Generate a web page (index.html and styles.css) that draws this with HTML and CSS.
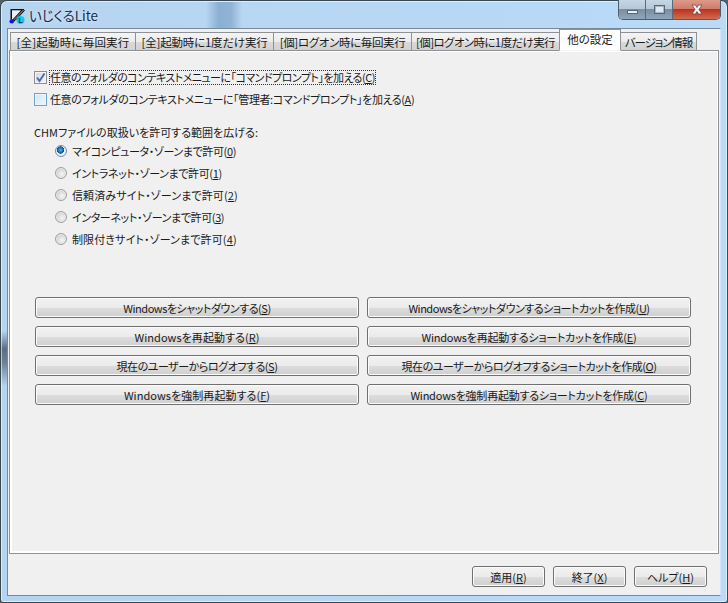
FILE: index.html
```html
<!DOCTYPE html>
<html lang="ja">
<head>
<meta charset="utf-8">
<title>いじくるLite</title>
<link rel="stylesheet" href="styles.css">
</head>
<body>
<div class="window">
  <div class="glass-shade"></div>
  <div class="titlebar">
    <svg class="app-icon" width="16" height="16" viewBox="0 0 16 16">
      <path d="M1.5 1H13V2.5H3V11H1.5Z" fill="#111"/>
      <path d="M3 2.5H11L5 11H3Z" fill="#eeeef2"/>
      <path d="M14 1L15.5 2.5 6 12.5 3.5 13.5 4.5 11Z" fill="#666" stroke="#111" stroke-width="1"/>
      <circle cx="2.8" cy="13.2" r="2.3" fill="#1018e0"/>
      <circle cx="11.5" cy="12" r="4" fill="#10c8f0"/>
      <text x="9.5" y="15" class="icon-letter">L</text>
    </svg>
    <span class="title">いじくるLite</span>
    <div class="controls">
      <div class="ctl ctl-min"><span class="glyph-min"></span></div>
      <div class="ctl ctl-max"><span class="glyph-max"></span></div>
      <div class="ctl ctl-close">
        <svg width="16" height="11" viewBox="0 0 16 11"><path d="M3 1H6.5L8 3.5 9.5 1H13L10 5.5 13 10H9.5L8 7.5 6.5 10H3L6 5.5Z" fill="#f2f2f2" stroke="#6b3a36" stroke-width=".7"/></svg>
      </div>
    </div>
  </div>
  <div class="client">
    <div class="tabs">
      <div class="tab t1">[全]起動時に毎回実行</div>
      <div class="tab t2">[全]起動時に1度だけ実行</div>
      <div class="tab t3">[個]ログオン時に毎回実行</div>
      <div class="tab t4">[個]ログオン時に1度だけ実行</div>
      <div class="tab active">他の設定</div>
      <div class="tab t6">バージョン情報</div>
    </div>
    <div class="panel">
      <div class="check-row first">
        <span class="check"><svg width="11" height="11" viewBox="0 0 11 11"><path d="M2 5.5L4.5 9 9.5 1.5" fill="none" stroke="#4a6fb5" stroke-width="2"/></svg></span>
        <span class="focus">任意のフォルダのコンテキストメニューに「コマンドプロンプト」を加える(<u>C</u>)</span>
      </div>
      <div class="check-row second">
        <span class="check empty"></span>
        <span>任意のフォルダのコンテキストメニューに「管理者:コマンドプロンプト」を加える(<u>A</u>)</span>
      </div>
      <div class="group-label">CHMファイルの取扱いを許可する範囲を広げる:</div>
      <div class="radios">
        <div class="radio-row"><span class="radio on"></span><span>マイコンピュータ・ゾーンまで許可(<u>0</u>)</span></div>
        <div class="radio-row"><span class="radio"></span><span>イントラネット・ゾーンまで許可(<u>1</u>)</span></div>
        <div class="radio-row kanji"><span class="radio"></span><span>信頼済みサイト・ゾーンまで許可(<u>2</u>)</span></div>
        <div class="radio-row"><span class="radio"></span><span>インターネット・ゾーンまで許可(<u>3</u>)</span></div>
        <div class="radio-row kanji"><span class="radio"></span><span>制限付きサイト・ゾーンまで許可(<u>4</u>)</span></div>
      </div>
      <div class="btn-grid">
        <div class="btn">Windowsをシャットダウンする(<u>S</u>)</div>
        <div class="btn">Windowsをシャットダウンするショートカットを作成(<u>U</u>)</div>
        <div class="btn short-kanji">Windowsを再起動する(<u>R</u>)</div>
        <div class="btn long-kanji">Windowsを再起動するショートカットを作成(<u>E</u>)</div>
        <div class="btn">現在のユーザーからログオフする(<u>S</u>)</div>
        <div class="btn">現在のユーザーからログオフするショートカットを作成(<u>O</u>)</div>
        <div class="btn short-kanji">Windowsを強制再起動する(<u>F</u>)</div>
        <div class="btn long-kanji">Windowsを強制再起動するショートカットを作成(<u>C</u>)</div>
      </div>
    </div>
    <div class="footer">
      <div class="btn small">適用(<u>R</u>)</div>
      <div class="btn small">終了(<u>X</u>)</div>
      <div class="btn small">ヘルプ(<u>H</u>)</div>
    </div>
  </div>
</div>
</body>
</html>
```
FILE: styles.css
```css
* { box-sizing: border-box; }
html, body { margin: 0; padding: 0; background: #50606e; }
body {
  width: 728px;
  height: 603px;
  overflow: hidden;
  font-family: "Noto Sans CJK JP", "Noto Sans", sans-serif;
  font-size: 11px;
  font-feature-settings: "palt";
  color: #1a1a1a;
}
u { text-underline-offset: 1px; text-decoration-thickness: 1px; }

.window {
  position: relative;
  width: 728px;
  height: 603px;
  padding: 0 6px 6px 6px;
  border: 1px solid #3a4650;
  border-radius: 7px 7px 3px 3px;
  background:
    linear-gradient(180deg, rgba(60,75,95,0) 330px, rgba(60,75,95,.75) 348px, rgba(60,75,95,.6) 362px, rgba(60,75,95,0) 385px) 0 0 / 6px 100% no-repeat,
    linear-gradient(90deg, #b5d4ef 0, #b9dbf8 100%);
  box-shadow: inset 0 0 0 1px rgba(255,255,255,.55);
  display: flex;
  flex-direction: column;
}
.glass-shade {
  position: absolute;
  left: 205px;
  top: 1px;
  width: 36px;
  height: 26px;
  background: linear-gradient(90deg, rgba(120,160,195,0), rgba(110,150,190,.6) 35%, rgba(120,155,195,.6) 70%, rgba(120,160,195,0));
}
.titlebar {
  position: relative;
  height: 27px;
  flex: none;
  display: flex;
  align-items: flex-start;
  padding-top: 7px;
  padding-left: 2px;
}
.app-icon { display: block; flex: none; }
.icon-letter { font: bold 7px "Liberation Sans", sans-serif; fill: #001040; }
.title {
  margin-left: 4px;
  margin-top: -1px;
  font-size: 13.5px;
  line-height: 16px;
  color: #1c2a48;
  text-shadow: 0 0 4px rgba(255,255,255,.8);
}
.controls {
  position: absolute;
  right: 0;
  top: -1px;
  width: 103px;
  height: 20px;
  display: flex;
  border: 1px solid #4e5c6c;
  border-top: 0;
  border-radius: 0 0 5px 5px;
  overflow: hidden;
}
.ctl { display: flex; align-items: center; justify-content: center; height: 100%; }
.ctl-min, .ctl-max {
  width: 27px;
  background: linear-gradient(#c6d6e4 0, #b6c8d8 45%, #7c8ea0 50%, #8fa6ba 100%);
  border-right: 1px solid #5a6c7c;
}
.ctl-close {
  flex: 1;
  background: linear-gradient(#dc9a88 0, #d17c6a 45%, #bb3320 50%, #cf6c50 100%);
}
.glyph-min { width: 11px; height: 4px; margin-top: 4px; background: #e8f0f6; border: 1px solid #56667c; }
.glyph-max { width: 11px; height: 9px; background: #dfe8f0; border: 1px solid #56667c; box-shadow: inset 0 0 0 1px #a6b6c6; }

.client {
  flex: 1;
  background: #f0f0f0;
  border-top: 1px solid #7a8794;
  border-left: 1px solid #7a8794;
  border-right: 1px solid #d4e6f5;
  border-bottom: 1px solid #7a8794;
  display: flex;
  flex-direction: column;
  overflow: hidden;
}
.tabs {
  flex: none;
  height: 21px;
  display: flex;
  align-items: flex-end;
  padding-left: 2px;
  position: relative;
  z-index: 1;
  font-size: 11.5px;
  letter-spacing: -.2px;
}
.tab {
  height: 19px;
  margin-bottom: -1px;
  border: 1px solid #8e9297;
  margin-right: -1px;
  background: linear-gradient(#f4f4f4 0, #ececec 50%, #d9d9d9 51%, #d2d2d2 100%);
  display: flex;
  align-items: center;
  justify-content: center;
  white-space: nowrap;
  line-height: 16px;
  flex: none;
}
.t1 { width: 126px; letter-spacing: .2px; }
.t2 { width: 139px; }
.t3 { width: 139px; letter-spacing: -.35px; }
.t4 { width: 149px; letter-spacing: -.6px; }
.t6 { width: 77px; letter-spacing: -1.1px; }
.active {
  width: 62px;
  height: 22px;
  padding-bottom: 3px;
  background: #fff;
  border-bottom-color: #f4f4f4;
  position: relative;
  z-index: 2;
  letter-spacing: 0;
}
.panel {
  flex: none;
  height: 504px;
  margin: 0 1px;
  border: 1px solid #8e9297;
  box-shadow: inset 0 0 0 1px #fff, inset 2px -2px 0 #fff;
  background: #f0f0f0;
  padding: 20px 26px 0 25px;
}
.check-row {
  height: 13px;
  margin-left: -1px;
  display: flex;
  align-items: center;
  gap: 3px;
  white-space: nowrap;
  line-height: 13px;
}
.check-row.first { letter-spacing: -.52px; }
.check-row.second { margin-top: 9px; letter-spacing: -.38px; }
.check {
  flex: none;
  width: 13px;
  height: 13px;
  border: 1px solid #8e8f8f;
  background: linear-gradient(135deg, #d8d8d8, #f4f4f4);
  box-shadow: inset 0 0 0 1px #f4f4f4;
  display: flex;
  align-items: center;
  justify-content: center;
}
.check.empty {
  border-color: #6fa3cc;
  background: linear-gradient(135deg, #cfe6f8, #eef7fd);
  box-shadow: inset 0 0 0 1px #e9f4fc;
}
.focus { outline: 1px dotted #333; outline-offset: 0; }
.group-label { margin: 18px 0 0 -1px; line-height: 16px; }
.radios { padding-left: 20px; letter-spacing: -.38px; }
.radio-row {
  height: 22px;
  display: flex;
  align-items: center;
  gap: 5px;
  white-space: nowrap;
}
.radio-row.kanji { letter-spacing: .12px; }
.radio {
  flex: none;
  width: 12px;
  height: 12px;
  border-radius: 50%;
  border: 1px solid #a0a0a0;
  background: radial-gradient(circle at 60% 60%, #f6f6f6 0, #d4d4d4 60%, #bcbcbc 100%);
  box-shadow: inset 0 0 0 1px #ececec;
}
.radio.on {
  border-color: #6f8ea8;
  background: radial-gradient(circle at 45% 40%, #58b0ec 0, #1a62a8 35%, #0e4a86 42%, #e8eef4 48%);
  box-shadow: none;
}
.btn-grid {
  display: grid;
  grid-template-columns: 324px 324px;
  grid-auto-rows: 21px;
  column-gap: 8px;
  row-gap: 8px;
  margin-top: 47px;
  letter-spacing: -.47px;
}
.btn {
  border: 1px solid #707070;
  border-radius: 3px;
  background: linear-gradient(#f2f2f2 0, #ebebeb 50%, #dddddd 51%, #cfcfcf 100%);
  box-shadow: inset 0 0 0 1px #fbfbfb;
  display: flex;
  align-items: center;
  justify-content: center;
  white-space: nowrap;
  line-height: 16px;
}
.btn.short-kanji { letter-spacing: .05px; }
.btn.long-kanji { letter-spacing: -.22px; }
.footer {
  flex: 1;
  display: flex;
  justify-content: flex-end;
  align-items: flex-start;
  gap: 8px;
  padding: 12px 13px 0 0;
}
.small { width: 73px; height: 21px; }
```
